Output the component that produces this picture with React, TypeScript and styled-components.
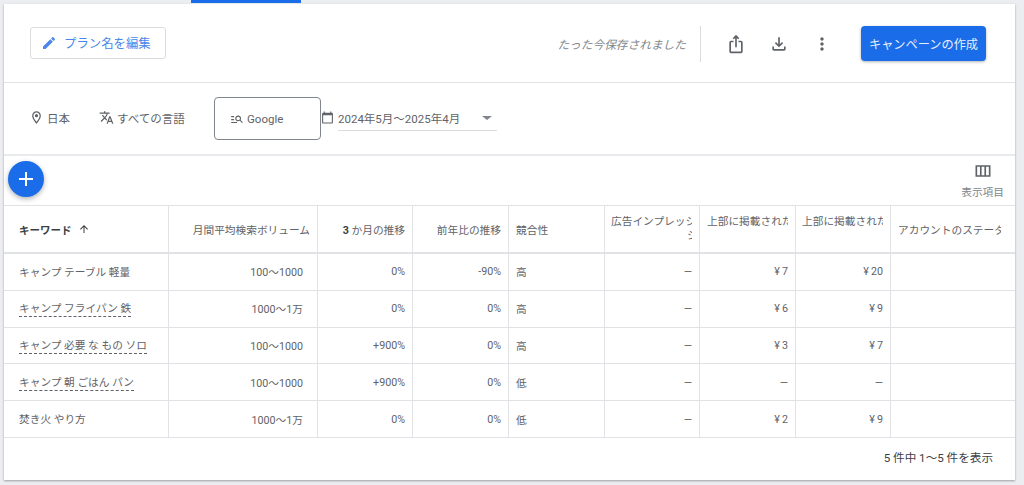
import React from 'react'
import styled, { createGlobalStyle, css } from 'styled-components'

const ink = '#5f6368'
const line = '#e0e2e5'
const blue = '#1a6ce8'
const columns = '165px 149px 95px 96px 96px 95px 96px 95px 124px'

const GlobalStyle = createGlobalStyle`
  html, body {
    margin: 0;
    height: 100%;
    overflow: hidden;
    background: #ebedf0;
  }
  * {
    box-sizing: border-box;
  }
  body {
    font-family: Roboto, "Noto Sans CJK JP", sans-serif;
    color: ${ink};
  }
`

const Tabs = styled.div`
  height: 4px;
  padding-left: 191px;
`

const ActiveTab = styled.div`
  width: 110px;
  height: 3px;
  background: ${blue};
`

const Panel = styled.main`
  width: 1011px;
  height: 476px;
  margin-left: 4px;
  background: #fff;
  box-shadow: 0 1px 2px rgba(60, 64, 67, 0.45);
  display: flex;
  flex-direction: column;
`

const Header = styled.header`
  height: 79px;
  flex: none;
  border-bottom: 1px solid ${line};
  display: flex;
  align-items: center;
  padding: 1px 29px 0 26px;
`

const EditButton = styled.button`
  width: 136px;
  height: 32px;
  margin-top: -2px;
  border: 1px solid #dadce0;
  border-radius: 3px;
  background: #fff;
  color: #4a87ea;
  font: inherit;
  font-size: 12.4px;
  display: flex;
  align-items: center;
  gap: 7px;
  padding: 0 0 0 10px;
`

const SavedNote = styled.span`
  margin-left: auto;
  font-size: 11.7px;
  font-style: italic;
  color: #80868b;
`

const Divider = styled.div`
  width: 1px;
  height: 36px;
  margin: 0 13px 0 14px;
  background: #dadce0;
`

const IconButton = styled.button`
  width: 43px;
  height: 36px;
  padding: 0;
  border: 0;
  background: none;
  color: ${ink};
  display: flex;
  align-items: center;
  justify-content: center;
`

const CreateButton = styled.button`
  width: 125px;
  height: 35px;
  margin-left: 18px;
  border: 0;
  border-radius: 4px;
  background: ${blue};
  color: #e6efff;
  font: inherit;
  font-size: 12.2px;
  box-shadow: 0 1px 3px rgba(60, 64, 67, 0.4);
  padding: 0;
`

const FilterBar = styled.div`
  height: 73px;
  flex: none;
  border-bottom: 2px solid #e8eaed;
  display: flex;
  align-items: center;
  padding: 0 0 2px 25px;
  font-size: 11.5px;
`

const Filter = styled.div<{ $width: number }>`
  width: ${(p) => p.$width}px;
  display: flex;
  align-items: center;
  gap: 3px;
`

const NetworkBox = styled.div`
  width: 107px;
  height: 43px;
  margin-top: 1px;
  border: 1px solid #80868b;
  border-radius: 4px;
  display: flex;
  align-items: center;
  gap: 3px;
  padding: 2px 0 0 15px;
`

const DateIcon = styled.span`
  display: flex;
  margin-right: 4px;
`

const DateSelect = styled.div`
  width: 159px;
  height: 25px;
  border-bottom: 1px solid #dadce0;
  display: flex;
  align-items: center;
  justify-content: space-between;
  padding-right: 5px;
  margin-top: 1px;
`

const Caret = styled.span`
  width: 0;
  height: 0;
  border-left: 5px solid transparent;
  border-right: 5px solid transparent;
  border-top: 4px solid #80868b;
`

const Toolbar = styled.div`
  height: 50px;
  flex: none;
  border-bottom: 1px solid ${line};
  display: flex;
  align-items: flex-start;
  justify-content: space-between;
  padding: 5px 11px 0 4px;
`

const Fab = styled.button`
  width: 36px;
  height: 36px;
  padding: 0;
  border: 0;
  border-radius: 50%;
  background: ${blue};
  color: #fff;
  display: flex;
  align-items: center;
  justify-content: center;
  box-shadow: 0 2px 5px rgba(60, 64, 67, 0.4);
`

const ColumnsToggle = styled.div`
  display: flex;
  flex-direction: column;
  align-items: center;
  font-size: 10.7px;
  gap: 3px;
  color: #80868b;
  svg {
    color: ${ink};
  }
`

const Row = styled.div<{ $head?: boolean }>`
  display: grid;
  grid-template-columns: ${columns};
  flex: none;
  font-size: 10.7px;
  height: ${(p) => (p.$head ? 48 : 36.8)}px;
  border-bottom: ${(p) => (p.$head ? 2 : 1)}px solid ${line};
`

const Cell = styled.div<{ $align?: 'left' | 'right'; $inset?: number }>`
  min-width: 0;
  overflow: hidden;
  white-space: nowrap;
  display: flex;
  align-items: center;
  border-right: 1px solid ${line};
  justify-content: ${(p) => (p.$align === 'right' ? 'flex-end' : 'flex-start')};
  ${(p) =>
    p.$align === 'right'
      ? css`
          padding-right: ${p.$inset ?? 7}px;
        `
      : css`
          padding-left: ${p.$inset ?? 7}px;
        `}
  &:last-child {
    border-right: 0;
  }
`

const KeywordHead = styled.span`
  font-size: 10.5px;
  font-weight: 700;
  color: #3c4043;
  display: flex;
  align-items: center;
  gap: 6px;
`

const HeadNumber = styled.b`
  color: #3c4043;
`

const StackedHead = styled.div`
  width: 81px;
  height: 28px;
  overflow: hidden;
  line-height: 14px;
  margin-top: -1px;
`

const HeadLine = styled.div<{ $indent?: number }>`
  height: 14px;
  padding-left: ${(p) => p.$indent ?? 0}px;
`

const ClippedHead = styled.div`
  width: 103px;
  overflow: hidden;
`

const Keyword = styled.span<{ $dashed?: boolean }>`
  padding-bottom: 1px;
  ${(p) =>
    p.$dashed &&
    css`
      border-bottom: 1px dashed ${ink};
    `}
`

const Footer = styled.footer`
  flex: 1;
  display: flex;
  align-items: center;
  justify-content: flex-end;
  padding: 0 22px 3px 0;
  font-size: 11.6px;
  color: #3c4043;
`

const Icon = ({ d, size = 16 }: { d: string; size?: number }) => (
  <svg width={size} height={size} viewBox="0 0 24 24" fill="currentColor">
    <path d={d} />
  </svg>
)

const paths = {
  edit: 'M3 17.25V21h3.75L17.81 9.94l-3.75-3.75L3 17.25zM20.71 7.04c.39-.39.39-1.02 0-1.41l-2.34-2.34c-.39-.39-1.02-.39-1.41 0l-1.83 1.83 3.75 3.75 1.83-1.83z',
  place:
    'M12 2C8.13 2 5 5.13 5 9c0 5.25 7 13 7 13s7-7.75 7-13c0-3.87-3.13-7-7-7zM7 9c0-2.76 2.24-5 5-5s5 2.24 5 5c0 2.88-2.88 7.19-5 9.88C9.92 16.21 7 11.85 7 9zm5-2.5a2.5 2.5 0 1 0 0 5 2.5 2.5 0 0 0 0-5z',
  translate:
    'M12.87 15.07l-2.54-2.51.03-.03c1.74-1.94 2.98-4.17 3.71-6.53H17V4h-7V2H8v2H1v1.99h11.17C11.5 7.92 10.44 9.75 9 11.35 8.07 10.32 7.3 9.19 6.69 8h-2c.73 1.63 1.73 3.17 2.98 4.56l-5.09 5.02L4 19l5-5 3.11 3.11.76-2.04zM18.5 10h-2L12 22h2l1.12-3h4.75L21 22h2l-4.5-12zm-2.62 7l1.62-4.33L19.12 17h-3.24z',
  search:
    'M7 9H2V7h5v2zm0 3H2v2h5v-2zm13.59 7l-3.83-3.83c-.8.52-1.74.83-2.76.83-2.76 0-5-2.24-5-5s2.24-5 5-5 5 2.24 5 5c0 1.02-.31 1.96-.83 2.75L22 17.59 20.59 19zM17 11c0-1.65-1.35-3-3-3s-3 1.35-3 3 1.35 3 3 3 3-1.35 3-3zM2 19h10v-2H2v2z',
  calendar:
    'M20 3h-1V1h-2v2H7V1H5v2H4c-1.1 0-2 .9-2 2v16c0 1.1.9 2 2 2h16c1.1 0 2-.9 2-2V5c0-1.1-.9-2-2-2zm0 18H4V8h16v13z',
  share:
    'M16 5l-1.42 1.42-1.59-1.59V16h-1.98V4.83L9.42 6.42 8 5l4-4 4 4zm4 5v11c0 1.1-.9 2-2 2H6c-1.11 0-2-.9-2-2V10c0-1.11.89-2 2-2h3v2H6v11h12V10h-3V8h3c1.1 0 2 .89 2 2z',
  download:
    'M18 15v3H6v-3H4v3c0 1.1.9 2 2 2h12c1.1 0 2-.9 2-2v-3h-2zm-1-4l-1.41-1.41L13 12.17V4h-2v8.17L8.41 9.59 7 11l5 5 5-5z',
  more: 'M12 8c1.1 0 2-.9 2-2s-.9-2-2-2-2 .9-2 2 .9 2 2 2zm0 2c-1.1 0-2 .9-2 2s.9 2 2 2 2-.9 2-2-.9-2-2-2zm0 6c-1.1 0-2 .9-2 2s.9 2 2 2 2-.9 2-2-.9-2-2-2z',
  columns:
    'M3 5v14h18V5H3zm5.33 12H5V7h3.33v10zm5.34 0h-3.33V7h3.33v10zM19 17h-3.33V7H19v10z',
  add: 'M19 13h-6v6h-2v-6H5v-2h6V5h2v6h6v2z',
  up: 'M4 12l1.41 1.41L11 7.83V20h2V7.83l5.58 5.59L20 12l-8-8-8 8z'
}

const rows = [
  { keyword: 'キャンプ テーブル 軽量', dashed: false, volume: '100〜1000', three: '0%', year: '-90%', competition: '高', low: '¥\u20097', high: '¥\u200920' },
  { keyword: 'キャンプ フライパン 鉄', dashed: true, volume: '1000〜1万', three: '0%', year: '0%', competition: '高', low: '¥\u20096', high: '¥\u20099' },
  { keyword: 'キャンプ 必要 な もの ソロ', dashed: true, volume: '100〜1000', three: '+900%', year: '0%', competition: '高', low: '¥\u20093', high: '¥\u20097' },
  { keyword: 'キャンプ 朝 ごはん パン', dashed: true, volume: '100〜1000', three: '+900%', year: '0%', competition: '低', low: '—', high: '—' },
  { keyword: '焚き火 やり方', dashed: false, volume: '1000〜1万', three: '0%', year: '0%', competition: '低', low: '¥\u20092', high: '¥\u20099' }
]

const App = () => (
  <>
    <GlobalStyle />
    <Tabs>
      <ActiveTab />
    </Tabs>
    <Panel>
      <Header>
        <EditButton>
          <Icon d={paths.edit} />
          プラン名を編集
        </EditButton>
        <SavedNote>たった今保存されました</SavedNote>
        <Divider />
        <IconButton>
          <Icon d={paths.share} size={20} />
        </IconButton>
        <IconButton>
          <Icon d={paths.download} size={20} />
        </IconButton>
        <IconButton>
          <Icon d={paths.more} size={20} />
        </IconButton>
        <CreateButton>キャンペーンの作成</CreateButton>
      </Header>

      <FilterBar>
        <Filter $width={70}>
          <Icon d={paths.place} size={15} />
          日本
        </Filter>
        <Filter $width={115}>
          <Icon d={paths.translate} size={15} />
          すべての言語
        </Filter>
        <NetworkBox>
          <Icon d={paths.search} size={14} />
          Google
        </NetworkBox>
        <DateIcon>
          <Icon d={paths.calendar} size={13} />
        </DateIcon>
        <DateSelect>
          2024年5月〜2025年4月
          <Caret />
        </DateSelect>
      </FilterBar>

      <Toolbar>
        <Fab>
          <Icon d={paths.add} size={24} />
        </Fab>
        <ColumnsToggle>
          <Icon d={paths.columns} size={20} />
          表示項目
        </ColumnsToggle>
      </Toolbar>

      <Row $head>
        <Cell $inset={15}>
          <KeywordHead>
            キーワード
            <Icon d={paths.up} size={12} />
          </KeywordHead>
        </Cell>
        <Cell $align="right">月間平均検索ボリューム</Cell>
        <Cell $align="right">
          <span>
            <HeadNumber>3</HeadNumber> か月の推移
          </span>
        </Cell>
        <Cell $align="right">前年比の推移</Cell>
        <Cell>競合性</Cell>
        <Cell $align="right">
          <StackedHead>
            <HeadLine>広告インプレッション</HeadLine>
            <HeadLine $indent={76}>ション シェア</HeadLine>
          </StackedHead>
        </Cell>
        <Cell $align="right">
          <StackedHead>
            <HeadLine>上部に掲載された広告</HeadLine>
          </StackedHead>
        </Cell>
        <Cell $align="right">
          <StackedHead>
            <HeadLine>上部に掲載された広告</HeadLine>
          </StackedHead>
        </Cell>
        <Cell>
          <ClippedHead>アカウントのステータス</ClippedHead>
        </Cell>
      </Row>

      {rows.map((row) => (
        <Row key={row.keyword}>
          <Cell $inset={15}>
            <Keyword $dashed={row.dashed}>{row.keyword}</Keyword>
          </Cell>
          <Cell $align="right" $inset={14}>
            {row.volume}
          </Cell>
          <Cell $align="right">{row.three}</Cell>
          <Cell $align="right">{row.year}</Cell>
          <Cell>{row.competition}</Cell>
          <Cell $align="right">—</Cell>
          <Cell $align="right">{row.low}</Cell>
          <Cell $align="right">{row.high}</Cell>
          <Cell />
        </Row>
      ))}

      <Footer>5 件中 1〜5 件を表示</Footer>
    </Panel>
  </>
)

export default App
